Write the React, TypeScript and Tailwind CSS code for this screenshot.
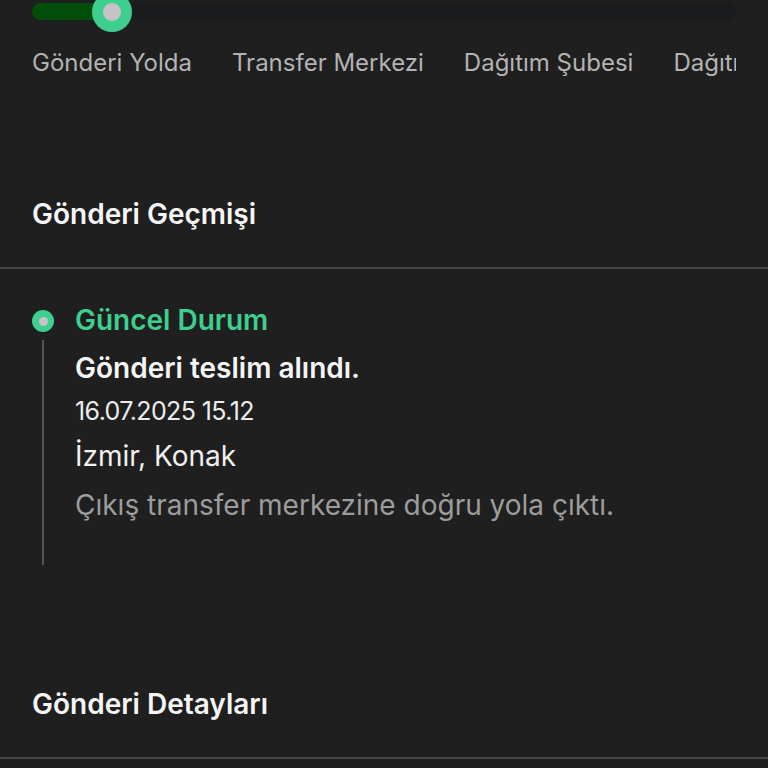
import React from "react";

const labels = ["Gönderi Yolda", "Transfer Merkezi", "Dağıtım Şubesi", "Dağıtımda", "Teslim Edildi"];

export default function App() {
  return (
    <div
      className="w-[768px] h-[768px] overflow-hidden bg-[#1f1f1f]"
      style={{ fontFamily: "Inter, 'Noto Sans', sans-serif" }}
    >
      {/* progress */}
      <div className="px-8 pt-[3px]">
        <div className="relative h-[17px] rounded-full bg-[#1a1b1d]">
          <div className="h-full w-[80px] rounded-l-full bg-[#034d0b]" />
          <div className="absolute left-[60px] top-[-11px] flex h-10 w-10 items-center justify-center rounded-full bg-[#3ecf8e]">
            <div className="h-[18px] w-[18px] rounded-full bg-[#c9c2c6]" />
          </div>
        </div>
        <div className="mt-[29px] flex gap-10 overflow-hidden whitespace-nowrap text-[24px] leading-[28px] text-[#b3b3b3]">
          {labels.map((l) => (
            <span key={l} className="shrink-0">
              {l}
            </span>
          ))}
        </div>
      </div>

      {/* history header */}
      <div className="px-8 mt-[120px] mb-[36px] text-[28px] leading-[34px] font-semibold text-[#f5f5f5]">
        Gönderi Geçmişi
      </div>
      <div className="h-[2px] bg-[#464646]" />

      {/* timeline */}
      <div className="px-8 pt-[34px] flex gap-[21px]">
        <div className="flex w-[22px] flex-col items-center">
          <div className="mt-[7px] flex h-[22px] w-[22px] items-center justify-center rounded-full bg-[#3ecf8e]">
            <div className="h-[9px] w-[9px] rounded-full bg-[#c9c2c6]" />
          </div>
          <div className="mt-[8px] h-[225px] w-[2px] bg-[#555555]" />
        </div>
        <div className="flex flex-col">
          <div className="text-[28px] leading-[34px] font-semibold text-[#3ecf8e]">Güncel Durum</div>
          <div className="mt-[14px] text-[28px] leading-[34px] font-semibold text-[#f5f5f5]">
            Gönderi teslim alındı.
          </div>
          <div className="mt-[12px] text-[25px] leading-[28px] tracking-[-0.6px] text-[#ececec]">
            16.07.2025 15.12
          </div>
          <div className="mt-[14px] text-[28px] leading-[34px] text-[#f0f0f0]">İzmir, Konak</div>
          <div className="mt-[15px] text-[28px] leading-[34px] text-[#9c9c9c]">
            Çıkış transfer merkezine doğru yola çıktı.
          </div>
        </div>
      </div>

      {/* details header */}
      <div className="px-8 mt-[122px] mb-[36px] text-[28px] leading-[34px] font-semibold text-[#f5f5f5]">
        Gönderi Detayları
      </div>
      <div className="h-[2px] bg-[#464646]" />
    </div>
  );
}
